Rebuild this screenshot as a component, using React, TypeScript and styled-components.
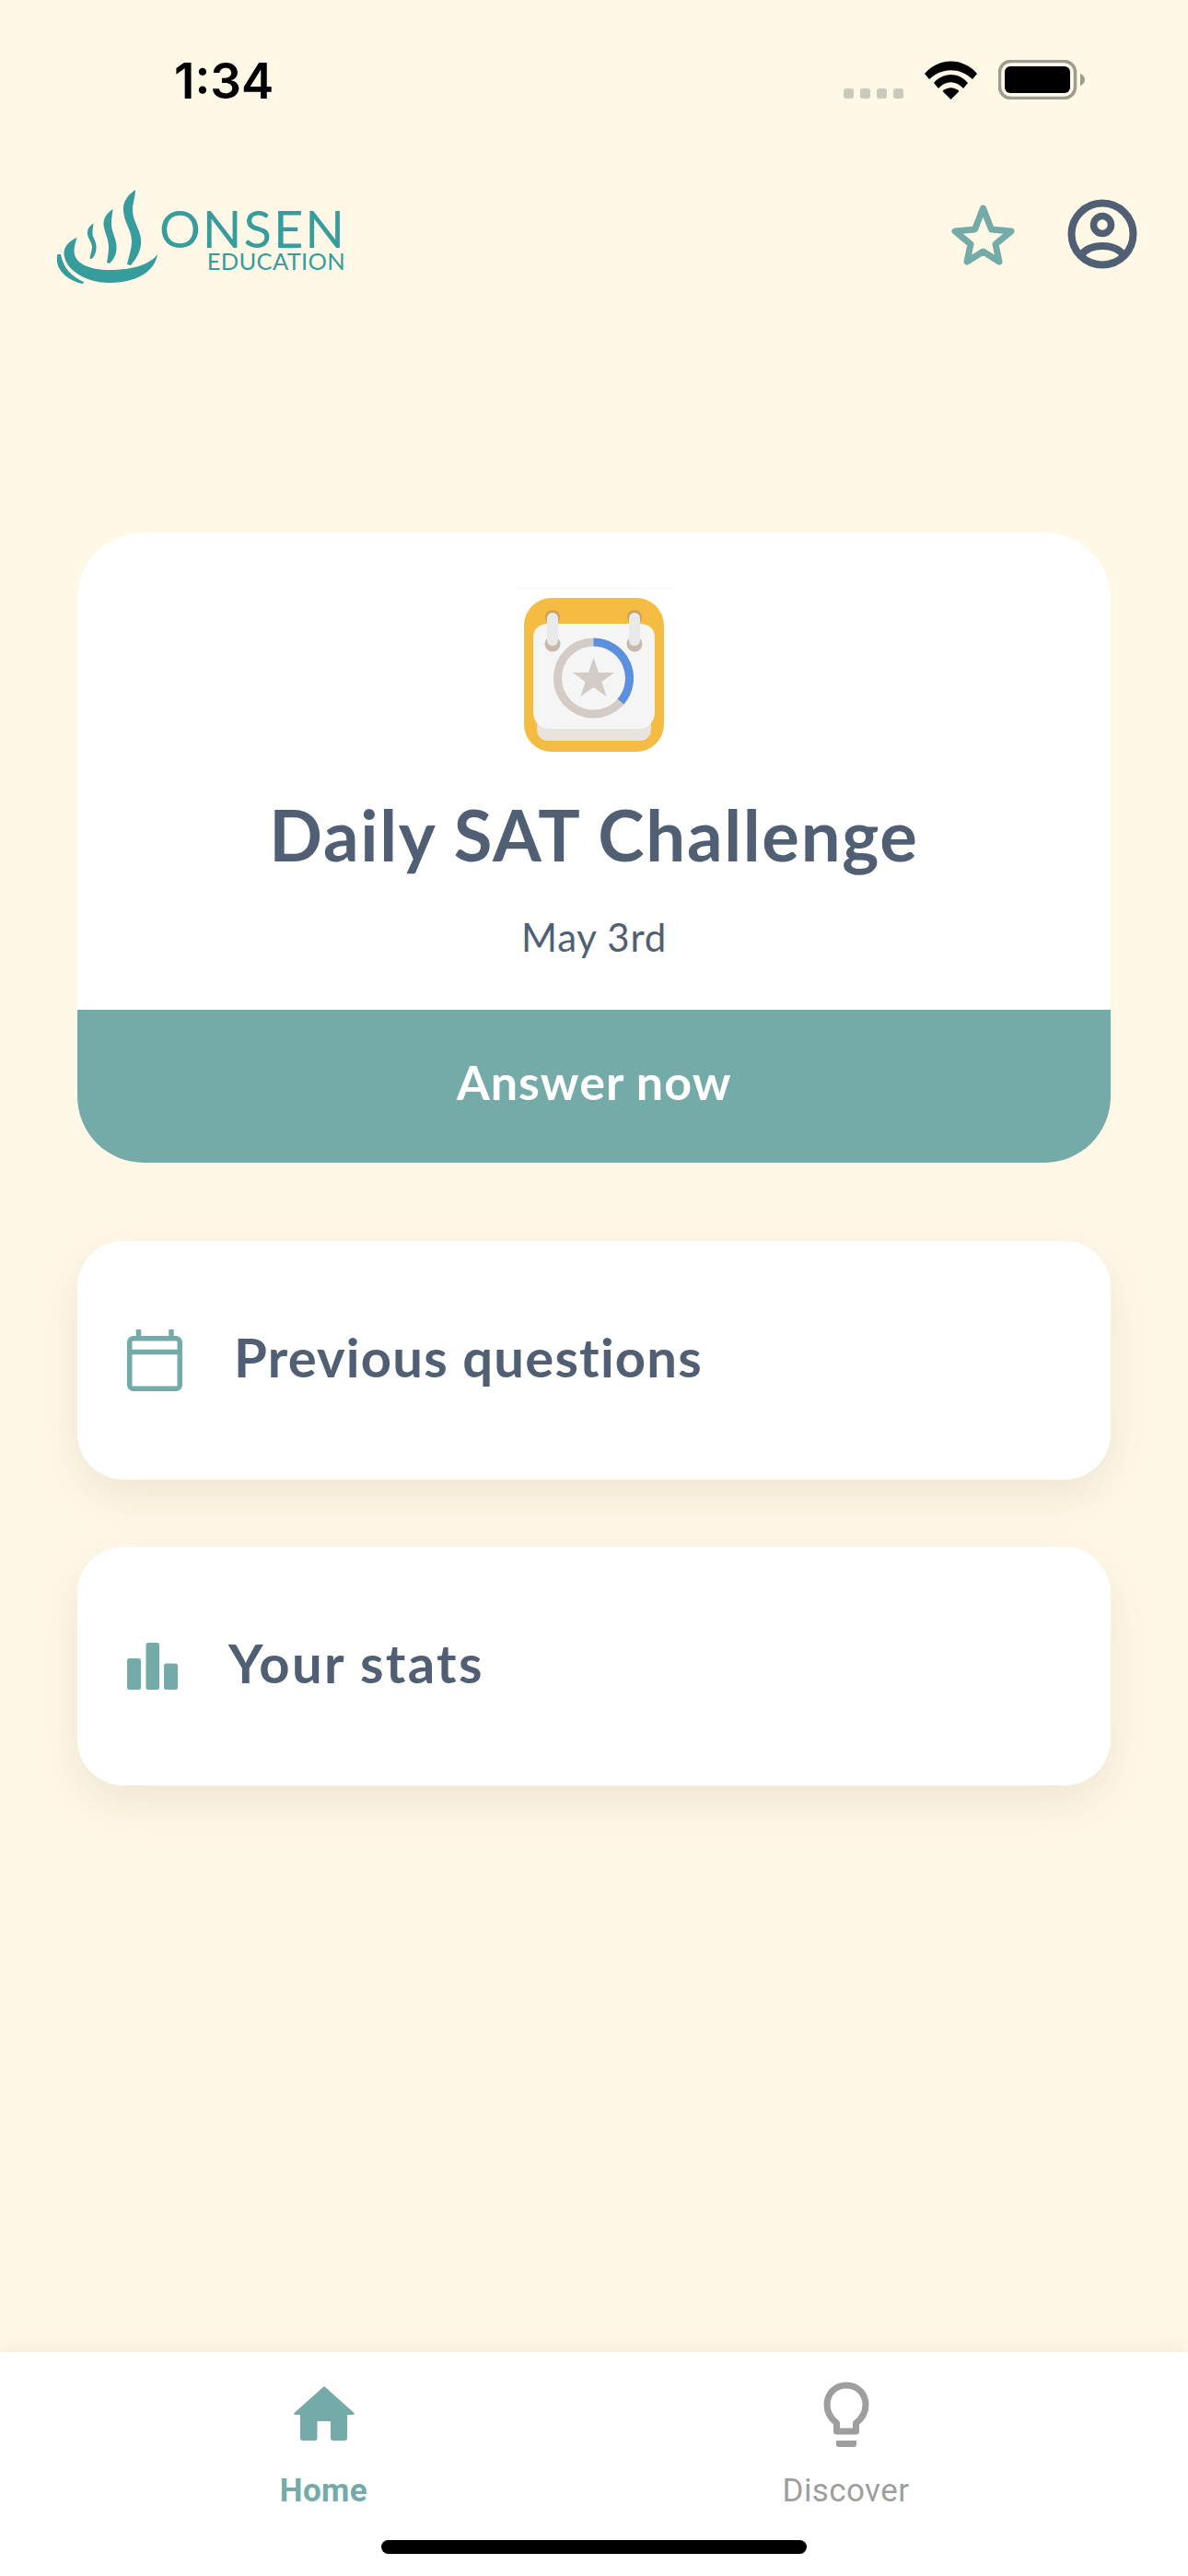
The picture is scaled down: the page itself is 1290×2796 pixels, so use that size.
import React from 'react';
import styled, { createGlobalStyle } from 'styled-components';

const TEAL = '#74aba8';
const SLATE = '#505f73';
const LOGO_TEAL = '#379c9c';
const CREAM = '#fff8e7';

const GlobalStyle = createGlobalStyle`
  html, body {
    margin: 0;
    padding: 0;
    background: ${CREAM};
  }
  * {
    box-sizing: border-box;
  }
`;

const Page = styled.div`
  width: 1290px;
  height: 2796px;
  display: flex;
  flex-direction: column;
  overflow: hidden;
  background: ${CREAM};
  font-family: 'Lato', 'Liberation Sans', sans-serif;
`;

const StatusBar = styled.div`
  height: 108px;
  padding: 0 112px 0 189px;
  display: flex;
  justify-content: space-between;
  align-items: flex-end;
`;

const Time = styled.span`
  font-family: 'Inter', sans-serif;
  font-size: 53px;
  font-weight: 600;
  line-height: 39px;
  letter-spacing: 0;
  color: #000;
`;

const StatusIcons = styled.div`
  display: flex;
  align-items: flex-end;
`;

const SignalDots = styled.div`
  display: flex;
  gap: 7px;
  margin-right: 23px;
  padding-bottom: 1px;
`;

const SignalDot = styled.i`
  display: block;
  width: 11px;
  height: 11px;
  border-radius: 3px;
  background: #cbc8bc;
`;

const Battery = styled.svg`
  margin-left: 23px;
`;

const Header = styled.header`
  margin-top: 98px;
  padding: 0 55px 0 60px;
  height: 102px;
  display: flex;
  justify-content: space-between;
  align-items: flex-start;
`;

const Logo = styled.div`
  display: flex;
  align-items: flex-start;
  color: ${LOGO_TEAL};
`;

const LogoWords = styled.div`
  margin: 20px 0 0 5px;
  width: 197px;
  display: flex;
  flex-direction: column;
  align-items: flex-end;
`;

const LogoName = styled.span`
  margin-right: -2px;
  font-size: 56px;
  line-height: 44px;
  font-weight: 400;
  letter-spacing: 2px;
`;

const LogoSub = styled.span`
  margin: 2px -1px 0 0;
  font-size: 25.500px;
  line-height: 22px;
  font-weight: 400;
  letter-spacing: 0.3px;
`;

const HeaderActions = styled.div`
  display: flex;
  gap: 57px;
  align-items: flex-start;
  padding-top: 10px;
`;

const StarIcon = styled.svg`
  margin-top: 6px;
`;

const Content = styled.main`
  flex: 1;
  margin-top: 270px;
  padding: 0 84px;
  display: flex;
  flex-direction: column;
`;

const ChallengeCard = styled.section`
  height: 684px;
  border-radius: 72px;
  overflow: hidden;
  background: #fff;
  display: flex;
  flex-direction: column;
  margin-bottom: 85px;
`;

const ChallengeBody = styled.div`
  flex: 1;
  padding-top: 60px;
  display: flex;
  flex-direction: column;
  align-items: center;
`;

const BadgeRule = styled.div`
  width: 172px;
  height: 1px;
  margin-bottom: 10px;
  background: #f6f6f6;
`;

const ChallengeTitle = styled.h1`
  margin: 47px 0 0;
  font-size: 76px;
  line-height: 86px;
  font-weight: 700;
  letter-spacing: 1.7px;
  color: ${SLATE};
`;

const ChallengeDate = styled.div`
  margin-top: 44px;
  font-size: 42px;
  line-height: 48px;
  letter-spacing: 0.8px;
  color: ${SLATE};
`;

const AnswerBar = styled.div`
  height: 166px;
  padding-bottom: 10px;
  display: flex;
  align-items: center;
  justify-content: center;
  background: ${TEAL};
  color: #fff;
  font-size: 52px;
  font-weight: 700;
  letter-spacing: 1px;
`;

const RowCard = styled.div<{ $gap: number }>`
  height: 259px;
  margin-bottom: 73px;
  padding: 0 0 0 54px;
  display: flex;
  align-items: center;
  gap: ${(p) => p.$gap}px;
  border-radius: 50px;
  background: #fff;
  box-shadow: 0 18px 50px rgba(80, 65, 25, 0.1);
`;

const RowLabel = styled.span<{ $spacing: number }>`
  font-size: 58px;
  line-height: 70px;
  font-weight: 700;
  letter-spacing: ${(p) => p.$spacing}px;
  color: ${SLATE};
  margin-top: -8px;
`;

const TabBar = styled.nav`
  height: 243px;
  padding: 0 88px 0 68px;
  display: grid;
  grid-template-columns: 1fr 1fr;
  background: #fff;
  box-shadow: 0 -6px 20px rgba(80, 65, 25, 0.06);
  position: relative;
`;

const Tab = styled.div<{ $top: number }>`
  height: 161px;
  padding-top: ${(p) => p.$top}px;
  display: flex;
  flex-direction: column;
  align-items: center;
`;

const TabIconWrap = styled.div<{ $h: number }>`
  height: ${(p) => p.$h}px;
`;

const TabLabel = styled.span<{ $active?: boolean }>`
  margin-top: ${(p) => (p.$active ? 34 : 27)}px;
  font-family: 'Roboto', sans-serif;
  font-size: 35px;
  line-height: 41px;
  letter-spacing: 0.4px;
  font-weight: ${(p) => (p.$active ? 700 : 400)};
  color: ${(p) => (p.$active ? TEAL : '#9e9e9e')};
`;

const HomeIndicator = styled.div`
  position: absolute;
  left: 414px;
  bottom: 24px;
  width: 462px;
  height: 15px;
  border-radius: 8px;
  background: #000;
`;

const WifiIcon = () => (
  <svg width="57" height="42" viewBox="0 0 57 42">
    <path d="M0 14C15 -4 42 -4 57 14L52 20C38 7 19 7 5 20Z" fill="#000" />
    <path d="M10 24C20 12 37 12 47 24L42 30C34 21 23 21 15 30Z" fill="#000" />
    <path d="M19.500 33C25 28 32 28 37.500 33L28.500 42Z" fill="#000" />
  </svg>
);

const BatteryIcon = () => (
  <Battery width="94" height="43" viewBox="0 0 94 43">
    <rect x="1.500" y="1.500" width="82" height="40" rx="12" fill="none" stroke="#9f9b8f" strokeWidth="3.500" />
    <rect x="7" y="7" width="71" height="29" rx="6" fill="#000" />
    <path d="M89 15C92 16 94 19 94 21.500C94 24 92 27 89 28Z" fill="#9f9b8f" />
  </Battery>
);

const LogoMark = () => (
  <svg width="112" height="102" viewBox="0 0 112 102" fill={LOGO_TEAL}>
    <path d="M23.500 51.700C13 57 9 63 9.500 70C11 88 35 101 59 101C86 101 108 90 111 70C103 81 84 87 59 87C37 87 21 80 20.500 67C20.500 61 22 57 23.500 51.700Z" />
    <path d="M2.500 70C-1 82 8 97 30 102L31 100C18 94 9 86 6 70Z" />
    <path d="M87 0C78 6 73 14 74 23C75 36 83 44 83 56C83 64 80 72 78 81L82 82C88 75 94 66 93 54C92 42 84 34 84 22C84 14 87 8 87 0Z" />
    <path d="M62.600 21C56 25 52 31 52.500 38C53.500 47 58 53 58 62C58 68 57 73 56 79L59 80C64 75 67 69 66.500 61C66 52 61 46 61 37C61 31 62 26 62.600 21Z" />
    <path d="M41.600 36.700C37 39 34.500 43 35 48C35.500 53 39.500 56 40 62C40 66 38 70 37.500 74.700L39.500 75C43 72 45 67 44.500 61C44 55 40.500 52 40.500 47C40.500 43 41 40 41.600 36.700Z" />
  </svg>
);

const FavouriteIcon = () => (
  <StarIcon width="69" height="67" viewBox="0 0 69 67">
    <polygon
      points="34.500,4 43.500,27 65,29 48,43 52,62 34.500,51 17,62 21,43 4,29 25.500,27"
      fill="none"
      stroke={TEAL}
      strokeWidth="7"
      strokeLinejoin="round"
    />
  </StarIcon>
);

const ProfileIcon = () => (
  <svg width="76" height="76" viewBox="0 0 76 76" fill="none" stroke={SLATE} strokeWidth="8">
    <circle cx="38" cy="38" r="33.500" />
    <circle cx="38" cy="28" r="9.500" strokeWidth="7.500" />
    <path d="M15 61C20 54 29 51 38 51C47 51 56 54 61 61" />
  </svg>
);

const ChallengeBadge = () => (
  <svg width="152" height="167" viewBox="0 0 152 167">
    <rect width="152" height="167" rx="30" fill="#f5bc44" />
    <rect x="14" y="128" width="124" height="27" rx="12" fill="#e9e3dd" />
    <path d="M10 44C10 33 17 28 26 28H126C135 28 142 33 142 44V124C142 134 135 142 126 142H26C17 142 10 134 10 124Z" fill="#f5f5f5" />
    <circle cx="31" cy="21" r="8" fill="#cf9f63" />
    <circle cx="120" cy="21" r="8" fill="#cf9f63" />
    <circle cx="31" cy="50" r="8.500" fill="#c9b9ab" />
    <circle cx="120" cy="50" r="8.500" fill="#c9b9ab" />
    <rect x="25" y="16" width="12" height="36" rx="6" fill="#e9e9e9" />
    <rect x="114" y="16" width="12" height="36" rx="6" fill="#e9e9e9" />
    <circle cx="75.500" cy="87" r="39" fill="none" stroke="#d2cbc6" strokeWidth="9" />
    <path d="M75.500 48A39 39 0 0 1 105 112.500" fill="none" stroke="#5a90dd" strokeWidth="9" />
    <polygon points="75.500,65 81,81 98,81 84.500,91 89.500,107 75.500,97 61.500,107 66.500,91 53,81 70,81" fill="#d2cbc6" />
  </svg>
);

const CalendarIcon = () => (
  <svg width="60" height="67" viewBox="0 0 60 67" fill="none" stroke={TEAL} strokeWidth="5.500">
    <rect x="2.750" y="9.750" width="54.500" height="54.500" rx="4" />
    <path d="M3 24.500H57" />
    <path d="M12.500 0V8M48 0V8" />
  </svg>
);

const StatsIcon = () => (
  <svg width="55" height="51" viewBox="0 0 55 51" fill={TEAL}>
    <rect y="17" width="15" height="34" rx="2.500" />
    <rect x="20.500" width="14.500" height="51" rx="2.500" />
    <rect x="40" y="22.500" width="15" height="28.500" rx="2.500" />
  </svg>
);

const HomeIcon = () => (
  <svg width="66" height="59" viewBox="0 0 66 59" fill={TEAL}>
    <path d="M33 0L65.500 29C66 30 65.500 31 64.500 31H58V56C58 58 57 59 55 59H43C41 59 40 58 40 56V38H25.500V56C25.500 58 24.500 59 23 59H10C8 59 7 58 7 56V31H1.500C0.500 31 0 30 0.500 29Z" />
  </svg>
);

const BulbIcon = () => (
  <svg width="50" height="71" viewBox="0 0 50 71">
    <path
      d="M14.500 54H35.500V45C42 40 46 33.500 46 25C46 13 37 4 25 4C13 4 4 13 4 25C4 33.500 8 40 14.500 45Z"
      fill="none"
      stroke="#9e9e9e"
      strokeWidth="7"
      strokeLinejoin="round"
    />
    <path d="M14 64H36V68C36 70 35 71 33 71H17C15 71 14 70 14 68Z" fill="#9e9e9e" />
  </svg>
);

export default function App() {
  return (
    <Page>
      <GlobalStyle />
      <StatusBar>
        <Time>1:34</Time>
        <StatusIcons>
          <SignalDots>
            <SignalDot />
            <SignalDot />
            <SignalDot />
            <SignalDot />
          </SignalDots>
          <WifiIcon />
          <BatteryIcon />
        </StatusIcons>
      </StatusBar>

      <Header>
        <Logo>
          <LogoMark />
          <LogoWords>
            <LogoName>ONSEN</LogoName>
            <LogoSub>EDUCATION</LogoSub>
          </LogoWords>
        </Logo>
        <HeaderActions>
          <FavouriteIcon />
          <ProfileIcon />
        </HeaderActions>
      </Header>

      <Content>
        <ChallengeCard>
          <ChallengeBody>
            <BadgeRule />
            <ChallengeBadge />
            <ChallengeTitle>Daily SAT Challenge</ChallengeTitle>
            <ChallengeDate>May 3rd</ChallengeDate>
          </ChallengeBody>
          <AnswerBar>Answer now</AnswerBar>
        </ChallengeCard>

        <RowCard $gap={56}>
          <CalendarIcon />
          <RowLabel $spacing={1.2}>Previous questions</RowLabel>
        </RowCard>
        <RowCard $gap={55}>
          <StatsIcon />
          <RowLabel $spacing={2.3}>Your stats</RowLabel>
        </RowCard>
      </Content>

      <TabBar>
        <Tab $top={37}>
          <TabIconWrap $h={59}>
            <HomeIcon />
          </TabIconWrap>
          <TabLabel $active>Home</TabLabel>
        </Tab>
        <Tab $top={32}>
          <TabIconWrap $h={71}>
            <BulbIcon />
          </TabIconWrap>
          <TabLabel>Discover</TabLabel>
        </Tab>
        <HomeIndicator />
      </TabBar>
    </Page>
  );
}
